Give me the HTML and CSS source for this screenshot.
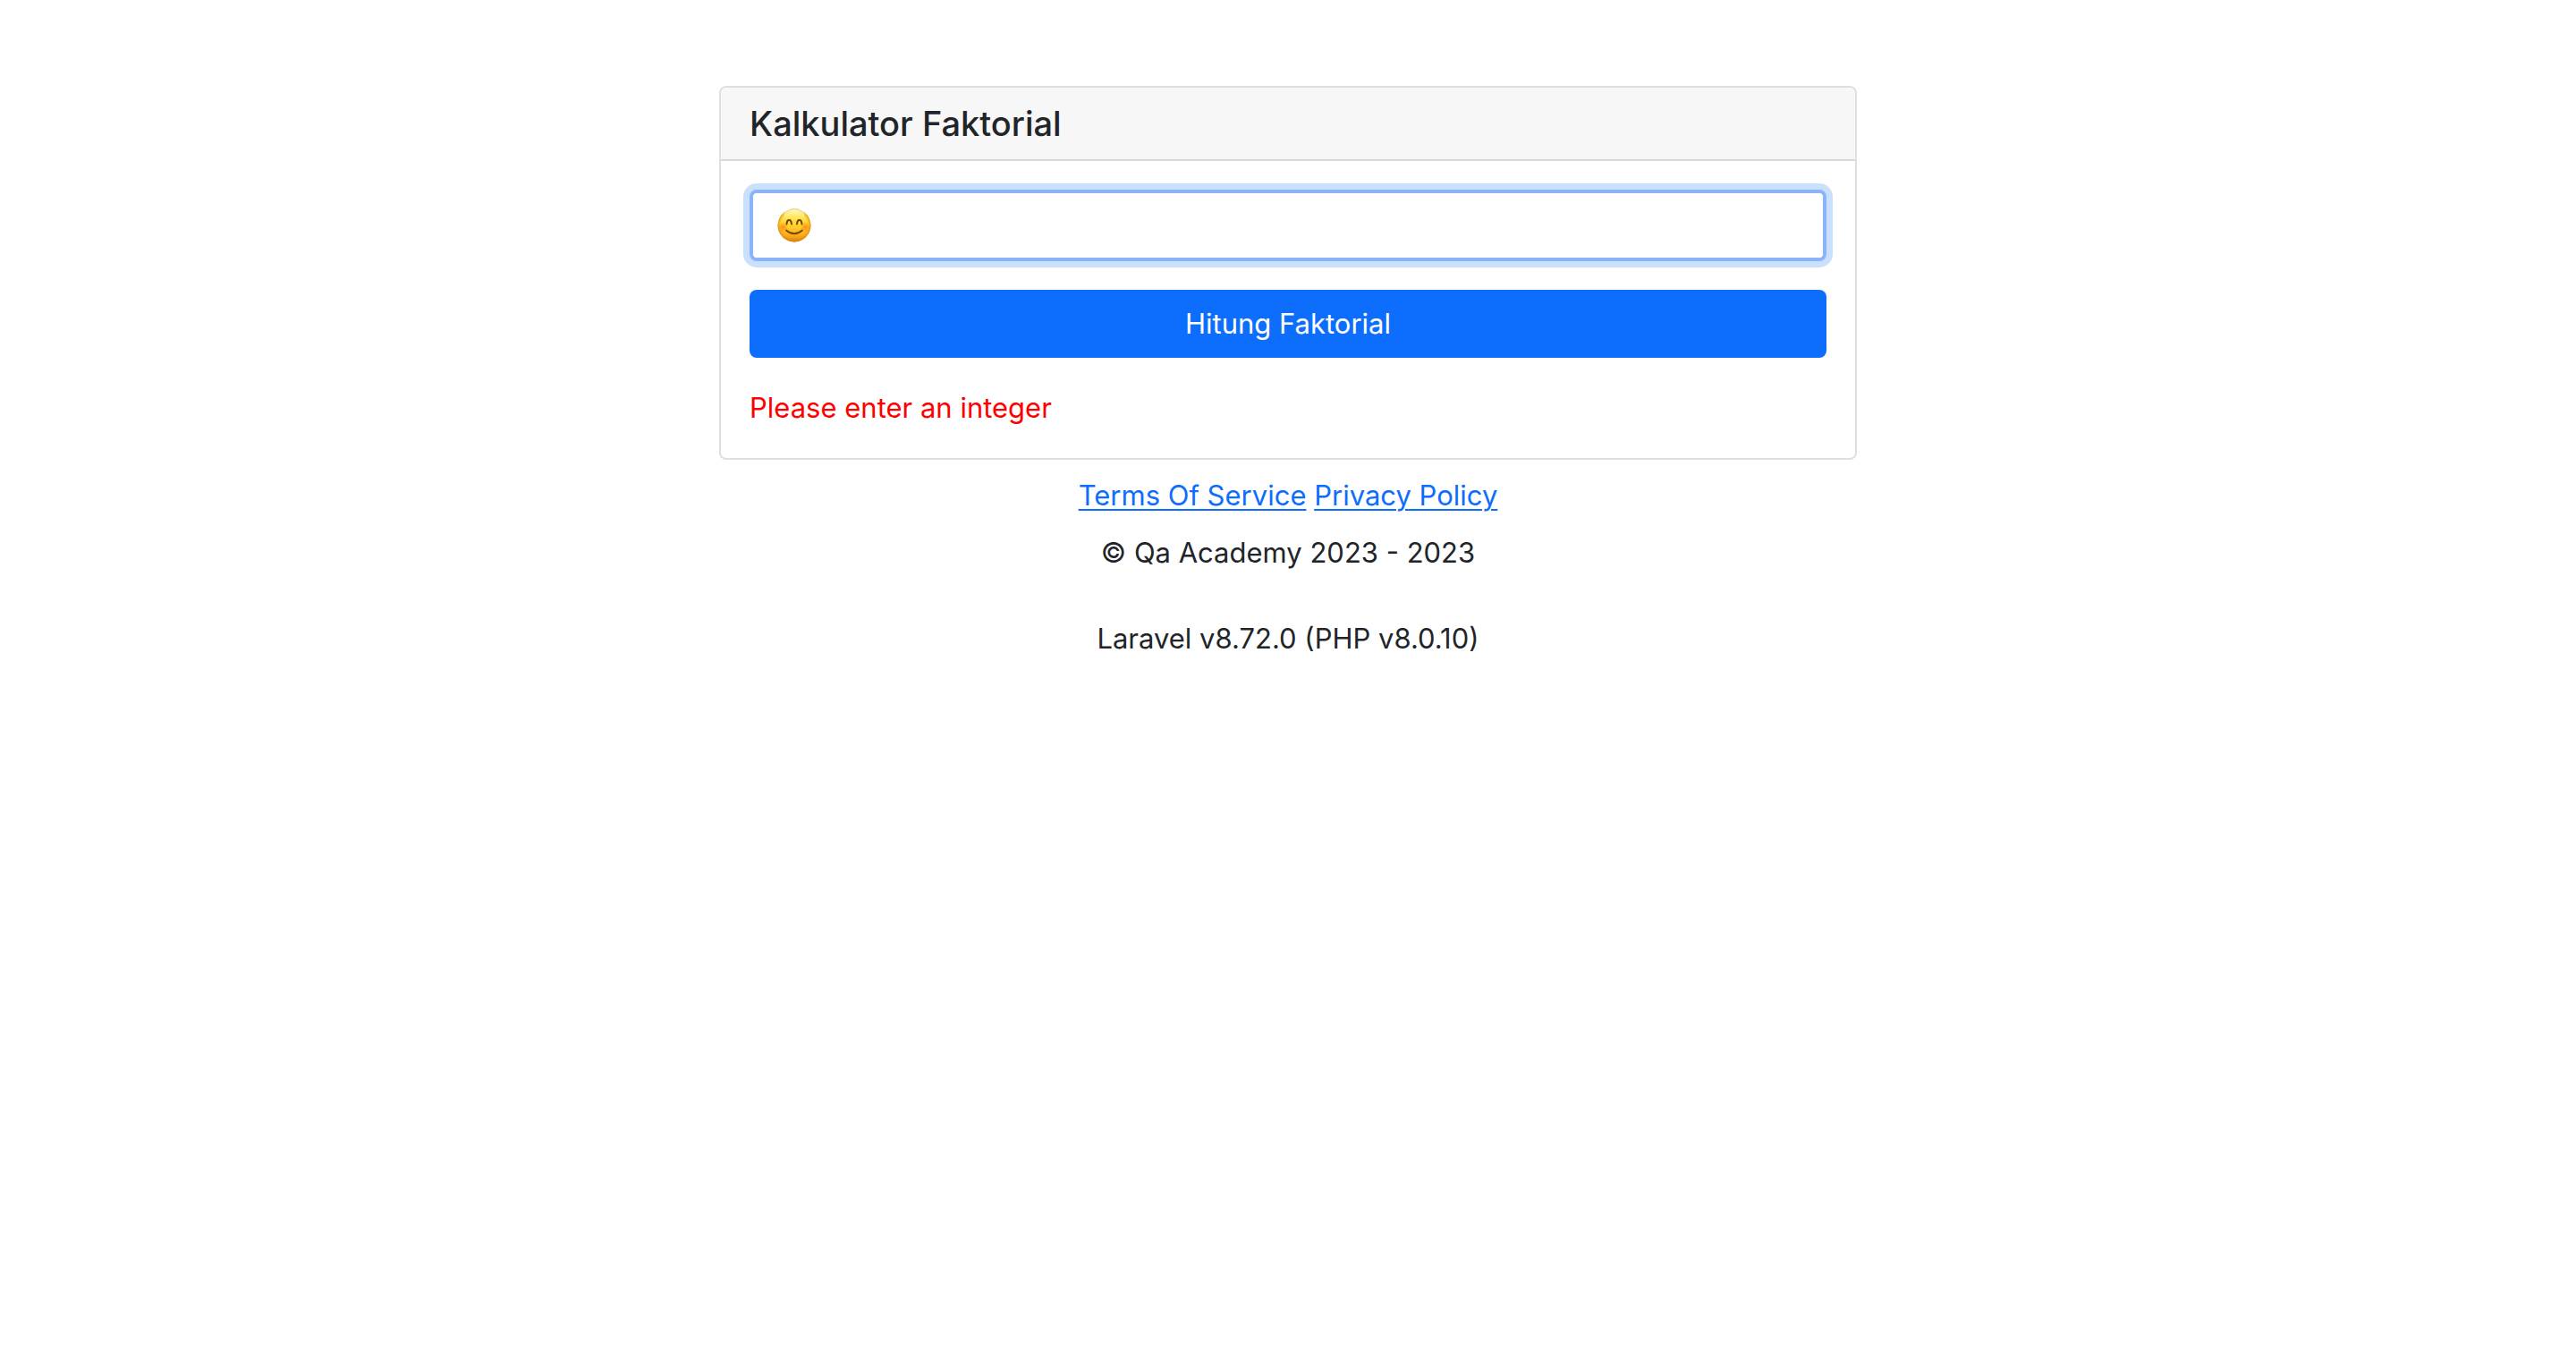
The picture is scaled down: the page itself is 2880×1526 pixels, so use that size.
FILE: index.html
```html
<!DOCTYPE html>
<html lang="id">
<head>
  <meta charset="utf-8">
  <meta name="viewport" content="width=device-width, initial-scale=1">
  <title>Kalkulator Faktorial</title>
  <link rel="stylesheet" href="styles.css">
</head>
<body>
  <main class="page">
    <section class="card">
      <header class="card-header">
        <h1 class="card-title">Kalkulator Faktorial</h1>
      </header>
      <form class="card-body">
        <div class="field">
          <input class="form-control" type="text" aria-label="Kalkulator Faktorial">
          <svg class="emoji" viewBox="0 0 38 38" role="img" aria-label="😊">
            <defs>
              <linearGradient id="face" x1="0" y1="0" x2="0" y2="1">
                <stop offset="0" stop-color="#fff06a"/>
                <stop offset=".5" stop-color="#fed42e"/>
                <stop offset=".82" stop-color="#fbaa18"/>
                <stop offset="1" stop-color="#d87a0b"/>
              </linearGradient>
              <radialGradient id="edge">
                <stop offset=".8" stop-color="#e88b0c" stop-opacity="0"/>
                <stop offset="1" stop-color="#d9820f" stop-opacity=".75"/>
              </radialGradient>
              <radialGradient id="blush">
                <stop offset="0" stop-color="#ff7a12" stop-opacity=".8"/>
                <stop offset="1" stop-color="#ff8a12" stop-opacity="0"/>
              </radialGradient>
              <linearGradient id="shine" x1="0" y1="0" x2="0" y2="1">
                <stop offset="0" stop-color="#fffde0" stop-opacity=".9"/>
                <stop offset="1" stop-color="#fff27a" stop-opacity="0"/>
              </linearGradient>
            </defs>
            <circle cx="19" cy="19" r="18.5" fill="url(#face)"/>
            <circle cx="19" cy="19" r="18.5" fill="url(#edge)"/>
            <ellipse cx="19" cy="7" rx="12" ry="6" fill="url(#shine)"/>
            <circle cx="6.5" cy="21" r="6" fill="url(#blush)"/>
            <circle cx="31.5" cy="21" r="6" fill="url(#blush)"/>
            <path d="M10.5 17.5C11 11.5 15.5 11.5 16 17.5M22 17.5C22.5 11.5 27 11.5 27.5 17.5" fill="none" stroke="#7b430a" stroke-width="2" stroke-linecap="round"/>
            <path d="M10 24.5Q19 32 28 24.5" fill="none" stroke="#7b430a" stroke-width="1.7" stroke-linecap="round"/>
          </svg>
        </div>
        <button class="btn" type="button">Hitung Faktorial</button>
        <p class="message">Please enter an integer</p>
      </form>
    </section>
    <footer class="footer">
      <nav><a href="#terms">Terms Of Service</a> <a href="#privacy">Privacy Policy</a></nav>
      <p class="copyright">© Qa Academy 2023 - 2023</p>
      <p class="version">Laravel v8.72.0 (PHP v8.0.10)</p>
    </footer>
  </main>
</body>
</html>
```
FILE: styles.css
```css
* {
  box-sizing: border-box;
}

body {
  margin: 0;
  background: #fff;
  color: #212529;
  font-family: Inter, "Liberation Sans", sans-serif;
  font-size: 31px;
  line-height: 48px;
}

p {
  margin: 0;
}

.page {
  max-width: 1272px;
  margin: 96px auto 0;
}

.card {
  border: 2px solid #dfdfdf;
  border-radius: 8px;
}

.card-header {
  padding: 16px 32px;
  border-bottom: 2px solid #d8d8d8;
  border-radius: 6px 6px 0 0;
  background: #f7f7f7;
}

.card-title {
  margin: 0;
  font-size: 38px;
  font-weight: 500;
  line-height: 48px;
}

.card-body {
  display: flex;
  flex-direction: column;
  gap: 32px;
  padding: 32px;
}

.field {
  position: relative;
  display: flex;
}

.form-control {
  width: 100%;
  padding: 12px 24px;
  border: 4px solid #8bb3f8;
  border-radius: 8px;
  outline: 0;
  box-shadow: 0 0 0 7px #cae0ff;
  background: #fff;
  color: inherit;
  font: inherit;
}

.emoji {
  position: absolute;
  top: 21px;
  left: 31px;
  width: 38px;
  height: 38px;
  pointer-events: none;
}

.btn {
  padding: 14px 24px;
  border: 0;
  border-radius: 8px;
  background: #0d6efd;
  color: #fff;
  font: inherit;
}

.message {
  color: #f00;
}

.footer {
  display: flex;
  flex-direction: column;
  gap: 16px;
  padding-top: 16px;
  text-align: center;
}

.footer a {
  color: #0d6efd;
  text-decoration: underline;
  text-decoration-thickness: 2px;
  text-underline-offset: 4px;
}

.version {
  margin-top: 32px;
}
```
